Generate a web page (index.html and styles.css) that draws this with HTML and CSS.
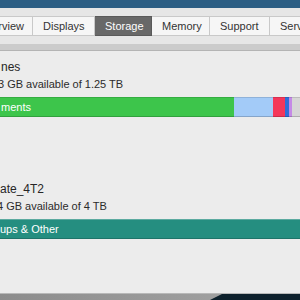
FILE: index.html
```
<!DOCTYPE html>
<html lang="en">

<head>
    <meta charset="UTF-8">
    <meta name="viewport" content="width=device-width, initial-scale=1.0">
    <title>Storage</title>
    <link rel="stylesheet" href="styles.css">
</head>

<body>
    <div id="desktop-top"></div>
    <div id="window">
        <div id="toolbar">
            <div class="tab tab-first">Overview</div>
            <div class="tab">Displays</div>
            <div class="tab selected">Storage</div>
            <div class="tab">Memory</div>
            <div class="tab">Support</div>
            <div class="tab">Service</div>
        </div>
        <div id="separator"></div>

        <div class="disk disk-first">
            <div class="disk-name cut-1">nes</div>
            <div class="disk-info cut-2">3 GB available of 1.25 TB</div>
            <div class="bar">
                <div class="seg green" style="width: 234px;">ments</div>
                <div class="seg light-blue" style="width: 39px;"></div>
                <div class="seg red" style="width: 12px;"></div>
                <div class="seg blue" style="width: 4px;"></div>
                <div class="seg purple" style="width: 3px;"></div>
                <div class="seg grey"></div>
            </div>
        </div>

        <div class="disk disk-second">
            <div class="disk-name">ate_4T2</div>
            <div class="disk-info cut-3">4 GB available of 4 TB</div>
            <div class="bar">
                <div class="seg teal">ups &amp; Other</div>
            </div>
        </div>
    </div>
    <div id="desktop-bottom">
        <div id="mountain"></div>
    </div>
</body>

</html>
```

FILE: styles.css
```
body {
    margin: 0;
    width: 300px;
    height: 300px;
    overflow: hidden;
    font-family: "Liberation Sans", Arial, sans-serif;
    background: #ececec;
    color: #262626;
}

#desktop-top {
    height: 8px;
    background: #2c5e84;
}

#window {
    height: 285px;
    background: #ececec;
    overflow: hidden;
}

#toolbar {
    display: flex;
    height: 28px;
    padding-top: 8px;
    background: #e6e6e6;
    margin-left: -40px;
}

.tab {
    box-sizing: border-box;
    height: 20px;
    padding: 0 10px;
    font-size: 11px;
    line-height: 19px;
    color: #333;
    background: #f6f6f6;
    border: 1px solid #c9c9c9;
    border-left: none;
    white-space: nowrap;
    flex-shrink: 0;
}

.tab-first {
    width: 73px;
    text-align: right;
    padding-right: 8px;
}

.tab:nth-child(2) { width: 62px; }
.tab:nth-child(3) { width: 57px; }
.tab:nth-child(4) { width: 58px; }
.tab:nth-child(5) { width: 60px; }

.tab.selected {
    background: #686868;
    border-color: #5a5a5a;
    color: #fff;
}

#separator {
    height: 6px;
    background: #cbcbcb;
    border-bottom: 1px solid #b4b4b4;
}

.disk-first {
    padding-top: 9px;
}

.disk-second {
    padding-top: 65px;
}

.disk-name {
    font-size: 12px;
    line-height: 15px;
    color: #262626;
}

.disk-info {
    font-size: 11px;
    line-height: 14px;
    margin-top: 2px;
    color: #2b2b2b;
}

.cut-1 { margin-left: 1px; }
.cut-2 { margin-left: -2px; }
.cut-3 { margin-left: -3px; }

.bar {
    display: flex;
    height: 20px;
    margin-top: 6px;
}

.seg {
    box-sizing: border-box;
    height: 20px;
    flex-shrink: 0;
    font-size: 11px;
    line-height: 19px;
    color: #fff;
    border-top: 1px solid rgba(0, 0, 0, 0.12);
    border-bottom: 1px solid rgba(0, 0, 0, 0.18);
    white-space: nowrap;
}

.green { background: #3dc54b; padding-left: 1px; }
.light-blue { background: #a3cbf8; }
.red { background: #f4375a; }
.blue { background: #2f6ed8; }
.purple { background: #c58ae6; }
.grey { background: #d6d6d6; flex-grow: 1; }

.teal {
    flex-grow: 1;
    background: #258e80;
    border-top-color: rgba(255, 255, 255, 0.25);
}

#desktop-bottom {
    position: relative;
    height: 7px;
    background: linear-gradient(to right, #8c8c8c, #a6a6a6);
    border-top: 1px solid #b8b8b8;
}

#mountain {
    position: absolute;
    top: 0;
    right: 0;
    width: 92px;
    height: 7px;
    background: #0d202c;
    clip-path: polygon(14px 0, 100% 0, 100% 100%, 0 100%);
}
```
